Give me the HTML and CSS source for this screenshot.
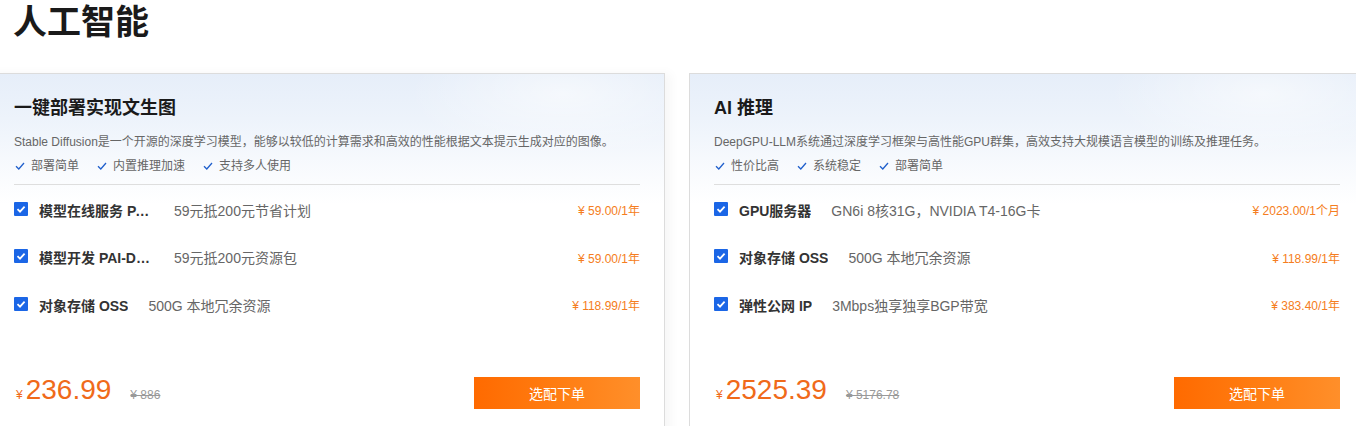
FILE: index.html
```html
<!DOCTYPE html>
<html lang="zh-CN">
<head>
<meta charset="utf-8">
<title>人工智能</title>
<link rel="stylesheet" href="styles.css">
</head>
<body>
<div class="page">
  <h1 class="page-title">人工智能</h1>
  <div class="cards">
    <section class="card card-hover">
      <h2 class="card-title">一键部署实现文生图</h2>
      <p class="card-desc">Stable Diffusion是一个开源的深度学习模型，能够以较低的计算需求和高效的性能根据文本提示生成对应的图像。</p>
      <ul class="features">
        <li><svg class="tick" viewBox="0 0 10 8" width="10" height="8"><path d="M1 4.2 L3.8 7 L9 1" fill="none" stroke="#1f5fcc" stroke-width="1.3"/></svg>部署简单</li>
        <li><svg class="tick" viewBox="0 0 10 8" width="10" height="8"><path d="M1 4.2 L3.8 7 L9 1" fill="none" stroke="#1f5fcc" stroke-width="1.3"/></svg>内置推理加速</li>
        <li><svg class="tick" viewBox="0 0 10 8" width="10" height="8"><path d="M1 4.2 L3.8 7 L9 1" fill="none" stroke="#1f5fcc" stroke-width="1.3"/></svg>支持多人使用</li>
      </ul>
      <div class="items">
        <div class="item">
          <span class="checkbox"><svg viewBox="0 0 14 14" width="14" height="14"><path d="M3.5 7.2 L6 9.6 L10.6 4.6" fill="none" stroke="#fff" stroke-width="1.8"/></svg></span>
          <span class="item-name">模型在线服务 PAI-EAS</span>
          <span class="item-desc">59元抵200元节省计划</span>
          <span class="item-price">¥ 59.00/1年</span>
        </div>
        <div class="item">
          <span class="checkbox"><svg viewBox="0 0 14 14" width="14" height="14"><path d="M3.5 7.2 L6 9.6 L10.6 4.6" fill="none" stroke="#fff" stroke-width="1.8"/></svg></span>
          <span class="item-name">模型开发 PAI-DSW</span>
          <span class="item-desc">59元抵200元资源包</span>
          <span class="item-price">¥ 59.00/1年</span>
        </div>
        <div class="item">
          <span class="checkbox"><svg viewBox="0 0 14 14" width="14" height="14"><path d="M3.5 7.2 L6 9.6 L10.6 4.6" fill="none" stroke="#fff" stroke-width="1.8"/></svg></span>
          <span class="item-name">对象存储 OSS</span>
          <span class="item-desc">500G 本地冗余资源</span>
          <span class="item-price">¥ 118.99/1年</span>
        </div>
      </div>
      <div class="card-footer">
        <div class="price">
          <span class="price-yen">¥</span><span class="price-num">236.99</span><span class="price-old">¥ 886</span>
        </div>
        <button class="buy-btn">选配下单</button>
      </div>
    </section>

    <section class="card">
      <h2 class="card-title">AI 推理</h2>
      <p class="card-desc">DeepGPU-LLM系统通过深度学习框架与高性能GPU群集，高效支持大规模语言模型的训练及推理任务。</p>
      <ul class="features">
        <li><svg class="tick" viewBox="0 0 10 8" width="10" height="8"><path d="M1 4.2 L3.8 7 L9 1" fill="none" stroke="#1f5fcc" stroke-width="1.3"/></svg>性价比高</li>
        <li><svg class="tick" viewBox="0 0 10 8" width="10" height="8"><path d="M1 4.2 L3.8 7 L9 1" fill="none" stroke="#1f5fcc" stroke-width="1.3"/></svg>系统稳定</li>
        <li><svg class="tick" viewBox="0 0 10 8" width="10" height="8"><path d="M1 4.2 L3.8 7 L9 1" fill="none" stroke="#1f5fcc" stroke-width="1.3"/></svg>部署简单</li>
      </ul>
      <div class="items">
        <div class="item">
          <span class="checkbox"><svg viewBox="0 0 14 14" width="14" height="14"><path d="M3.5 7.2 L6 9.6 L10.6 4.6" fill="none" stroke="#fff" stroke-width="1.8"/></svg></span>
          <span class="item-name">GPU服务器</span>
          <span class="item-desc">GN6i 8核31G，NVIDIA T4-16G卡</span>
          <span class="item-price">¥ 2023.00/1个月</span>
        </div>
        <div class="item">
          <span class="checkbox"><svg viewBox="0 0 14 14" width="14" height="14"><path d="M3.5 7.2 L6 9.6 L10.6 4.6" fill="none" stroke="#fff" stroke-width="1.8"/></svg></span>
          <span class="item-name">对象存储 OSS</span>
          <span class="item-desc">500G 本地冗余资源</span>
          <span class="item-price">¥ 118.99/1年</span>
        </div>
        <div class="item">
          <span class="checkbox"><svg viewBox="0 0 14 14" width="14" height="14"><path d="M3.5 7.2 L6 9.6 L10.6 4.6" fill="none" stroke="#fff" stroke-width="1.8"/></svg></span>
          <span class="item-name">弹性公网 IP</span>
          <span class="item-desc">3Mbps独享独享BGP带宽</span>
          <span class="item-price">¥ 383.40/1年</span>
        </div>
      </div>
      <div class="card-footer">
        <div class="price">
          <span class="price-yen">¥</span><span class="price-num">2525.39</span><span class="price-old">¥ 5176.78</span>
        </div>
        <button class="buy-btn">选配下单</button>
      </div>
    </section>
  </div>
</div>
</body>
</html>
```

FILE: styles.css
```css
html, body {
  margin: 0;
  padding: 0;
  overflow: hidden;
  background: #fff;
}

body {
  font-family: "Liberation Sans", "Noto Sans CJK SC", sans-serif;
  color: #333;
}

.page {
  margin-left: -11px;
  width: 1400px;
}

.page-title {
  margin: 0;
  padding-left: 24px;
  font-size: 34px;
  line-height: 44px;
  font-weight: 700;
  color: #1a1a1a;
}

.cards {
  display: flex;
  gap: 24px;
  margin-top: 29px;
}

.card {
  flex: 0 0 676px;
  box-sizing: border-box;
  height: 400px;
  padding: 21px 24px 0;
  border: 1px solid #dcdcdc;
  background:
    radial-gradient(ellipse 220px 90px at 85% 20px, rgba(255,255,255,0.55), rgba(255,255,255,0) 70%),
    linear-gradient(180deg, #e6eef9 0px, #edf3fb 45px, #f6f9fd 85px, #ffffff 130px);
}

.card-hover {
  box-shadow: 6px 0 10px rgba(0, 0, 0, 0.035);
}

.card-title {
  margin: 0;
  font-size: 18px;
  line-height: 26px;
  font-weight: 700;
  color: #1a1a1a;
}

.card-desc {
  margin: 12px 0 0;
  font-size: 12px;
  line-height: 18px;
  color: #666;
}

.features {
  list-style: none;
  margin: 6px 0 0;
  padding: 0;
  display: flex;
  gap: 17px;
  font-size: 12px;
  line-height: 18px;
  color: #666;
}

.features li {
  display: flex;
  align-items: center;
  gap: 6px;
}

.tick {
  display: block;
  margin-left: 1px;
}

.items {
  margin-top: 9px;
  border-top: 1px solid #dedede;
  padding-top: 1px;
}

.item {
  display: flex;
  align-items: center;
  height: 47.5px;
}

.checkbox {
  flex: 0 0 14px;
  width: 14px;
  height: 14px;
  background: #1b66e6;
  border-radius: 1px;
  margin-right: 11px;
  margin-top: -2px;
}

.checkbox svg {
  display: block;
}

.item-name {
  max-width: 115px;
  margin-right: 20px;
  white-space: nowrap;
  overflow: hidden;
  text-overflow: ellipsis;
  font-size: 14px;
  font-weight: 700;
  color: #333;
}

.item-desc {
  flex: 1;
  font-size: 14px;
  color: #666;
  white-space: nowrap;
}

.item-price {
  font-size: 12px;
  color: #f57d20;
  white-space: nowrap;
}

.card-footer {
  display: flex;
  justify-content: space-between;
  align-items: center;
  margin-top: 45.5px;
}

.price {
  display: flex;
  align-items: baseline;
  line-height: 32px;
}

.price-yen {
  font-size: 12px;
  color: #f06a1a;
  margin-left: 2px;
  margin-right: 3px;
}

.price-num {
  font-size: 28px;
  color: #f06a1a;
}

.price-old {
  margin-left: 19px;
  font-size: 12px;
  color: #999;
  text-decoration: line-through;
}

.buy-btn {
  width: 166px;
  height: 32px;
  border: 0;
  padding: 0;
  background: linear-gradient(90deg, #ff6a00 0%, #ff7d12 50%, #ff8f2a 100%);
  color: #fff;
  font-family: "Liberation Sans", "Noto Sans CJK SC", sans-serif;
  font-size: 14px;
  cursor: pointer;
}
```
